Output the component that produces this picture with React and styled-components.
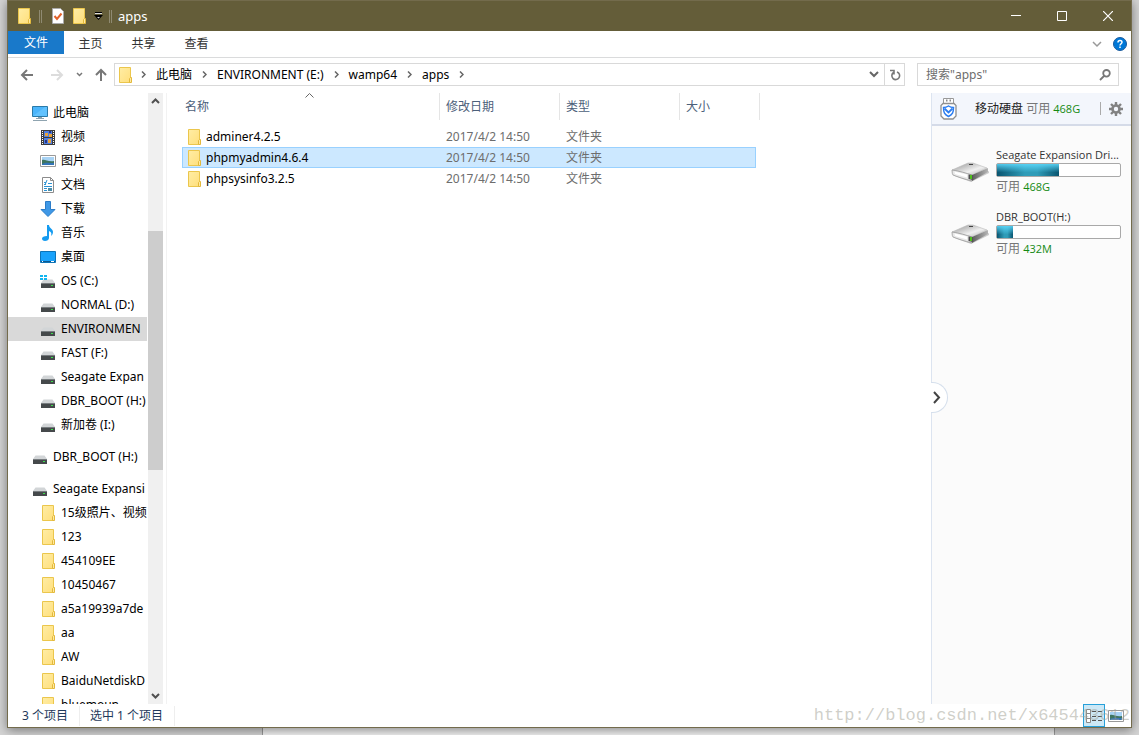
import styled, { createGlobalStyle, css } from 'styled-components';

const GlobalStyle = createGlobalStyle`
  * {
    box-sizing: border-box;
  }
  body {
    margin: 0;
    background: #d4d4d4;
    font-family: 'Noto Sans', 'Noto Sans CJK SC', sans-serif;
    font-size: 12px;
    line-height: 20px;
    color: #000;
  }
  button, input {
    font: inherit;
    color: inherit;
    margin: 0;
    padding: 0;
    border: 0;
    background: none;
  }
  a {
    color: inherit;
    text-decoration: none;
  }
  ul {
    list-style: none;
    margin: 0;
    padding: 0;
  }
  svg {
    display: block;
    flex: none;
  }
`;

const Desktop = styled.div`
  display: flex;
  flex-direction: column;
  height: 100vh;
  overflow: hidden;
`;

const Window = styled.div`
  position: relative;
  z-index: 1;
  flex: 1;
  min-height: 0;
  display: flex;
  flex-direction: column;
  margin: 0 7px;
  background: #fff;
  border: 1px solid #736b4c;
  box-shadow: 0 2px 10px rgba(0, 0, 0, 0.45);
`;

const BackWindow = styled.div`
  flex: none;
  height: 7px;
  margin: 0 84px 0 262px;
  background: #f2f2f2;
  border: solid #9a9a9a;
  border-width: 0 1px;
`;

const TitleBar = styled.header`
  display: flex;
  align-items: center;
  flex: none;
  height: 30px;
  background: #645d39;
  color: #fff;
`;

const QuickAccess = styled.div`
  display: flex;
  align-items: center;
  gap: 8px;
  flex: 1;
  padding-left: 10px;
`;

const TitleGroup = styled.div`
  display: flex;
  align-items: center;
  gap: 6px;
`;

const IconButton = styled.button`
  display: flex;
  align-items: center;
  justify-content: center;
`;

const PropertiesButton = styled(IconButton)`
  padding: 0 1px 0 2px;
`;

const Separator = styled.span`
  width: 3px;
  height: 13px;
  border: solid #8f8a72;
  border-width: 0 1px;
`;

const Title = styled.h1`
  margin: 0;
  font-size: 13px;
  font-weight: 400;
`;

const WindowButton = styled(IconButton)`
  width: 46px;
  height: 30px;
`;

const Tabs = styled.nav`
  display: flex;
  flex: none;
  height: 27px;
  border-bottom: 1px solid #dadbdc;
  color: #333;
`;

const Tab = styled.a`
  width: 53px;
  height: 26px;
  line-height: 26px;
  text-align: center;
  ${({ $primary }) => $primary && css`
    width: 56px;
    height: 23px;
    line-height: 24px;
    background: #1979ca;
    color: #fff;
  `}
`;

const TabTools = styled.div`
  display: flex;
  align-items: center;
  gap: 11px;
  margin-left: auto;
  padding-right: 4px;
`;

const Toolbar = styled.div`
  display: flex;
  align-items: center;
  flex: none;
  height: 35px;
  padding: 0 12px 2px;
`;

const History = styled.div`
  display: flex;
  align-items: center;
  gap: 12px;
  width: 94px;
`;

const AddressBar = styled.div`
  display: flex;
  align-items: center;
  flex: 1;
  height: 23px;
  padding-left: 4px;
  border: 1px solid #d9d9d9;
`;

const Crumbs = styled.div`
  display: flex;
  align-items: center;
  gap: 10px;
  margin-left: 9px;
`;

const AddressTools = styled.div`
  display: flex;
  align-items: center;
  align-self: stretch;
  margin-left: auto;
`;

const AddressButton = styled(IconButton)`
  width: 20px;
  align-self: stretch;
  border-left: ${({ $divided }) => ($divided ? '1px solid #d9d9d9' : 0)};
`;

const SearchBox = styled.label`
  display: flex;
  align-items: center;
  width: 202px;
  height: 23px;
  margin-left: 12px;
  padding: 0 7px 0 8px;
  border: 1px solid #d9d9d9;
  input {
    flex: 1;
    min-width: 0;
    outline: 0;
  }
  input::placeholder {
    color: #6d6d6d;
    opacity: 1;
  }
`;

const Content = styled.div`
  display: flex;
  flex: 1;
  min-height: 0;
`;

const NavPane = styled.aside`
  display: flex;
  flex: none;
  width: 159px;
  padding-right: 3px;
  border-right: 1px solid #f2f2f2;
`;

const Tree = styled.ul`
  flex: 1;
  min-width: 0;
  overflow: hidden;
  padding-top: 8px;
`;

const TreeItem = styled.li`
  margin-top: ${({ $spaced }) => ($spaced ? '8px' : 0)};
  margin-right: 1px;
  overflow: hidden;
  background: ${({ $active }) => ($active ? '#d9d9d9' : 'none')};
  a {
    display: flex;
    align-items: center;
    gap: 5px;
    height: 24px;
    padding-left: ${({ $root }) => ($root ? '24px' : '32px')};
    white-space: nowrap;
  }
`;

const ScrollBar = styled.div`
  display: flex;
  flex-direction: column;
  width: 15px;
  background: #f0f0f0;
`;

const ScrollButton = styled(IconButton)`
  height: 17px;
`;

const ScrollTrack = styled.div`
  flex: 1;
  display: flex;
  flex-direction: column;
`;

const ScrollSpace = styled.div`
  flex: ${({ $size }) => $size};
`;

const ScrollThumb = styled.div`
  flex: 239;
  background: #cdcdcd;
`;

const FileArea = styled.main`
  flex: 1;
  min-width: 0;
  padding-left: 15px;
`;

const FileTable = styled.table`
  width: 574px;
  table-layout: fixed;
  border-collapse: collapse;
`;

const HeaderCell = styled.th`
  position: relative;
  width: ${({ $width }) => $width};
  height: 27px;
  padding: 0 0 0 ${({ $first }) => ($first ? '3px' : '6px')};
  text-align: left;
  font-weight: 400;
  color: #4c607a;
  &::after {
    content: '';
    position: absolute;
    top: 0;
    right: ${({ $last }) => ($last ? '-4px' : 0)};
    width: 1px;
    height: 27px;
    background: #e5e5e5;
  }
`;

const SortMark = styled.span`
  position: absolute;
  top: 0;
  left: 50%;
  margin-left: -6px;
`;

const FileRow = styled.tr`
  ${({ $selected }) => $selected && css`
    background: #cce8ff;
    outline: 1px solid #99d1ff;
    outline-offset: -1px;
  `}
`;

const FileCell = styled.td`
  height: 21px;
  padding: 0 0 0 6px;
  color: #6d6d6d;
`;

const TableGap = styled.tbody`
  td {
    height: 6px;
    padding: 0;
  }
`;

const FileName = styled.a`
  display: flex;
  align-items: center;
  gap: 5px;
  color: #000;
`;

const DiskPane = styled.aside`
  position: relative;
  flex: none;
  width: 200px;
  background: #fbfbfb;
  border-left: 1px solid #dce4f0;
`;

const DiskHeader = styled.div`
  display: flex;
  align-items: center;
  height: 33px;
  padding: 0 8px;
  background: #f3f6fc;
  border-bottom: 2px solid #d5dbe8;
`;

const DiskTitle = styled.h2`
  flex: 1;
  margin: 0 0 0 18px;
  font-size: 12px;
  font-weight: 400;
  color: #222;
`;

const Muted = styled.span`
  color: #777;
`;

const Size = styled.span`
  font-family: 'Open Sans', sans-serif;
  font-size: 11px;
  color: #138a13;
`;

const HeaderRule = styled.span`
  width: 1px;
  height: 13px;
  margin-right: 8px;
  background: #aaa;
`;

const Disk = styled.section`
  display: flex;
  align-items: center;
  gap: 6px;
  height: 62px;
  padding: 0 10px 0 19px;
`;

const DiskList = styled.div`
  padding-top: 14px;
`;

const DiskInfo = styled.div`
  flex: 1;
  min-width: 0;
  line-height: 16px;
`;

const DiskName = styled.div`
  white-space: nowrap;
  font-family: 'Open Sans', sans-serif;
  font-size: 11px;
  color: #333;
`;

const Meter = styled.div`
  height: 14px;
  margin-bottom: 2px;
  border: 1px solid #a9a9a9;
  border-radius: 2px;
  background: #fff;
`;

const MeterFill = styled.div`
  height: 100%;
  background:
    linear-gradient(rgba(90, 215, 250, 0.9), rgba(90, 215, 250, 0) 70%),
    linear-gradient(90deg, #0a5570, #2f9cb8 45%, #2f9cb8 65%, #0a5570);
`;

const Handle = styled.button`
  position: absolute;
  top: 289px;
  left: -1px;
  display: flex;
  align-items: center;
  justify-content: center;
  width: 17px;
  height: 31px;
  padding-right: 5px;
  background: #fff;
  border: 1px solid #d5dfec;
  border-left: 0;
  border-radius: 0 16px 16px 0;
`;

const StatusBar = styled.footer`
  display: flex;
  align-items: center;
  flex: none;
  height: 23px;
  padding-left: 14px;
  color: #1e395b;
`;

const StatusText = styled.span`
  margin-right: 10px;
  padding-right: 11px;
  border-right: 1px solid #eee;
`;

const ViewButtons = styled.div`
  display: flex;
  align-self: stretch;
  margin-left: auto;
  padding-right: 4px;
`;

const ViewButton = styled(IconButton)`
  width: 22px;
  ${({ $active }) => $active && css`
    background: #cce8f6;
    border: 1px solid #26a0da;
  `}
`;

const Watermark = styled.div`
  position: absolute;
  right: 1px;
  bottom: 0;
  z-index: 2;
  font: 17px/22px 'Liberation Mono', monospace;
  color: rgba(160, 160, 148, 0.5);
  pointer-events: none;
`;

const Stroke = ({ d, w = 16, h = 16, color = '#555', width = 1.5 }) => (
  <svg width={w} height={h} viewBox={`0 0 ${w} ${h}`} fill="none" stroke={color} strokeWidth={width}>
    <path d={d} />
  </svg>
);

const FolderIcon = ({ size = 13 }) => (
  <svg width={size} height="16" viewBox={size === 16 ? '-2 0 16 16' : '0 0 13 16'}>
    <defs>
      <linearGradient id="folder" x2="1" y2="1">
        <stop stopColor="#ffeda5" />
        <stop offset="1" stopColor="#ffdf7c" />
      </linearGradient>
    </defs>
    <path d="M.5.5h11v15H.5z" fill="url(#folder)" stroke="#ebc64c" />
    <path d="M10.500 15.500v-4l1-1h1v5z" fill="#ffe9a0" stroke="#e3b93c" />
  </svg>
);

const DriveIcon = ({ os }) => (
  <svg width="16" height="16" viewBox="0 0 16 16">
    <path d="M3.500 6.500h9L15 10H1z" fill="#d2d5d7" />
    <path d="M1 10h14v5H1z" fill="#45494b" />
    <path d="M1 10h14v1H1z" fill="#777c7f" />
    <path d="M11 12h2v1h-2z" fill="#3be04c" />
    {os && <path d="M0 2h3v2H0zM4 2h3v2H4zM0 5h3v2H0zM4 5h3v2H4z" fill="#12b5f0" />}
  </svg>
);

const PcIcon = () => (
  <svg width="16" height="16" viewBox="0 0 16 16">
    <path d="M.5 1.500h15v10H.5z" fill="#4bb5fb" stroke="#2a7aa8" />
    <path d="M1 11 13 2h2v9z" fill="#6bc7ff" opacity=".7" />
    <path d="M6 12h4v1H6zM4 13h8v1H4zM1 15h14v1H1z" fill="#8fa4b0" />
  </svg>
);

const VideoIcon = () => (
  <svg width="16" height="16" viewBox="0 0 16 16">
    <path d="M1 1h14v15H1z" fill="#3c3c3c" />
    <path d="M4 2h8v6H4zM4 9h8v6H4z" fill="#4f7fe0" />
    <path d="M5 4h3v3H5zM8 10h3v4H8zM9 5h3v3H9z" fill="#e8a33a" />
    <path d="M9 2h2v2H9zM5 11h2v3H5z" fill="#26358a" />
    <path d="M2.500 2v14M13.500 2v14" stroke="#fff" strokeDasharray="1 1" />
  </svg>
);

const PictureIcon = () => (
  <svg width="16" height="16" viewBox="0 0 16 16">
    <path d="M.5 2.500h15v11H.5z" fill="#fff" stroke="#999" />
    <path d="M2 4h12v8H2z" fill="#a8d3f5" />
    <path d="M2 7c3-1 6 2 12 1v4H2z" fill="#3f7560" />
    <path d="M2 11c4-2 8-1 12-1v2H2z" fill="#3374b8" />
  </svg>
);

const DocIcon = () => (
  <svg width="16" height="16" viewBox="0 0 16 16">
    <path d="M2.500.5h8l3 3v12h-11z" fill="#fff" stroke="#8c8c8c" />
    <path d="M10.500.5v3h3" fill="none" stroke="#8c8c8c" />
    <path d="M4 7.500h2M4 5.500h2M8 6.500h4M4 9.500h8M4 11.500h3M4 13.500h3M7 3l-2 5" stroke="#2c93d4" />
    <path d="M8 11h4v3H8z" fill="#4d8da8" />
  </svg>
);

const DownloadIcon = () => (
  <svg width="16" height="16" viewBox="0 0 16 16">
    <path d="M5.500.5h5v8h4.500l-7 7-7-7h4.500z" fill="#3f98e6" stroke="#2b7cc8" />
  </svg>
);

const MusicIcon = () => (
  <svg width="16" height="16" viewBox="0 0 16 16">
    <path d="M7 0h2c0 3 4 4 4 7 0 2-1 3-2 4 1-3 0-4-2-5v7c0 2-2 3-4 3s-3-1-3-2.500S4 11 7 11z" fill="#159bf0" />
  </svg>
);

const DesktopIcon = () => (
  <svg width="16" height="16" viewBox="0 0 16 16">
    <path d="M.5 2.500h15v11H.5z" fill="#19a2fb" stroke="#0d74b8" />
    <path d="M1 12h14v1H1z" fill="#0c588f" />
    <path d="M2 12h1v1H2zM11 12h3v1h-3z" fill="#fff" />
  </svg>
);

const UsbIcon = () => (
  <svg width="17" height="22" viewBox="0 0 17 22" fill="none">
    <path d="M3.500 5.500v-5h10v5" fill="#fff" stroke="#999" />
    <path d="M6 2.500h1.500M9.500 2.500H11" stroke="#888" strokeWidth="2" />
    <path d="M3 5.500h11l2 2V18l-3 3H4l-3-3V7.500z" fill="#fff" stroke="#8f8f8f" strokeWidth="1.300" />
    <path d="M3.500 9.500c2 0 3.500-.5 5-1.500 1.500 1 3 1.500 5 1.500 0 5-1 7-5 9-4-2-5-4-5-9z" stroke="#2d7ef0" strokeWidth="1.500" />
    <path d="m4.500 10.500 4 4 4-4" stroke="#2d7ef0" strokeWidth="1.800" />
  </svg>
);

const GearIcon = () => (
  <svg width="14" height="14" viewBox="0 0 14 14" fill="none" stroke="#828282">
    <circle cx="7" cy="7" r="3.500" strokeWidth="2.600" />
    <path d="M7 0v3M7 11v3M0 7h3M11 7h3M2 2l2 2M10 10l2 2M2 12l2-2M10 4l2-2" strokeWidth="2.400" />
  </svg>
);

const HardDiskIcon = () => (
  <svg width="39" height="22" viewBox="0 0 39 22">
    <defs>
      <linearGradient id="diskTop" x2="1" y2="1">
        <stop stopColor="#8f8f8f" />
        <stop offset=".6" stopColor="#f0f0f0" />
        <stop offset="1" stopColor="#aaa" />
      </linearGradient>
      <linearGradient id="diskSide" x2="1">
        <stop stopColor="#5c5c5c" />
        <stop offset="1" stopColor="#b5b5b5" />
      </linearGradient>
    </defs>
    <path d="M1 15 20 22l18-9v-2L21 19z" fill="#ccc" />
    <path d="M1 10 17 3h5l14 5-15 7z" fill="url(#diskTop)" stroke="#bbb" strokeWidth=".6" />
    <path d="M18 4h4v1h-4z" fill="#444" />
    <path d="M1 10c7 1 14 3 20 5v6C13 19 7 17 2 15q-1-1-1-5z" fill="#e8e8e8" stroke="#999" strokeWidth=".8" />
    <path d="M3.500 11.500 16 14.500v3L4 14z" fill="#fff" />
    <path d="M21 15 37 8v4l-16 9z" fill="url(#diskSide)" />
    <path d="m17.500 14.500 4 .5v5l-4-1z" fill="#4b4b4b" />
    <path d="M19 15h2v4h-2z" fill="#4fbf1d" />
  </svg>
);

const TREE = [
  { label: '此电脑', icon: <PcIcon />, root: true },
  { label: '视频', icon: <VideoIcon /> },
  { label: '图片', icon: <PictureIcon /> },
  { label: '文档', icon: <DocIcon /> },
  { label: '下载', icon: <DownloadIcon /> },
  { label: '音乐', icon: <MusicIcon /> },
  { label: '桌面', icon: <DesktopIcon /> },
  { label: 'OS (C:)', icon: <DriveIcon os /> },
  { label: 'NORMAL (D:)' },
  { label: 'ENVIRONMEN', active: true },
  { label: 'FAST (F:)' },
  { label: 'Seagate Expan' },
  { label: 'DBR_BOOT (H:)' },
  { label: '新加卷 (I:)' },
  { label: 'DBR_BOOT (H:)', root: true, spaced: true },
  { label: 'Seagate Expansi', root: true, spaced: true },
  ...['15级照片、视频', '123', '454109EE', '10450467', 'a5a19939a7de', 'aa', 'AW', 'BaiduNetdiskD', 'bluemoun'].map(
    (label) => ({ label, icon: <FolderIcon size={16} /> })
  ),
];

const FILES = ['adminer4.2.5', 'phpmyadmin4.6.4', 'phpsysinfo3.2.5'];

const DISKS = [
  { name: 'Seagate Expansion Dri...', free: '468G', used: 50 },
  { name: 'DBR_BOOT(H:)', free: '432M', used: 13 },
];

const CRUMBS = ['此电脑', 'ENVIRONMENT (E:)', 'wamp64', 'apps'];

const CrumbArrow = () => <Stroke d="m1 .5 3 3-3 3" w={5} h={7} color="#666" />;

const App = () => (
  <Desktop>
    <GlobalStyle />
    <Window>
      <TitleBar>
        <QuickAccess>
          <FolderIcon />
          <Separator />
          <PropertiesButton aria-label="Properties">
            <svg width="12" height="16" viewBox="0 0 12 16">
              <path d="M.5.5h8l3 3v12H.5z" fill="#fff" stroke="#aaa" />
              <path d="m2.500 8 2.500 3 4.500-5.500" fill="none" stroke="#e2622a" strokeWidth="2" />
            </svg>
          </PropertiesButton>
          <IconButton aria-label="New folder"><FolderIcon /></IconButton>
          <TitleGroup>
            <IconButton aria-label="Customize">
              <svg width="9" height="8" viewBox="0 0 9 8">
                <path d="M1 0h7v1H1zM0 3h9L4.500 8z" fill="#000" />
                <path d="M1 1h7v1H1zM3 5h3L4.500 6.500z" fill="#ddd" />
              </svg>
            </IconButton>
            <Separator />
            <Title>apps</Title>
          </TitleGroup>
        </QuickAccess>
        <WindowButton aria-label="Minimize"><Stroke d="M0 4.500h10" w={10} h={10} color="#fff" width={1} /></WindowButton>
        <WindowButton aria-label="Maximize"><Stroke d="M.5.5h9v9h-9z" w={10} h={10} color="#fff" width={1} /></WindowButton>
        <WindowButton aria-label="Close"><Stroke d="m0 0 10 10M10 0 0 10" w={10} h={10} color="#fff" width={1.2} /></WindowButton>
      </TitleBar>

      <Tabs>
        <Tab href="#" $primary>文件</Tab>
        <Tab href="#">主页</Tab>
        <Tab href="#">共享</Tab>
        <Tab href="#">查看</Tab>
        <TabTools>
          <IconButton aria-label="Expand ribbon"><Stroke d="m1 1 4 4 4-4" w={10} h={7} color="#999" /></IconButton>
          <IconButton aria-label="Help">
            <svg width="14" height="14" viewBox="0 0 14 14">
              <circle cx="7" cy="7" r="6.500" fill="#0078d7" stroke="#1a5a9c" />
              <path d="M5 5.500C5 2.800 9 2.800 9 5.200 9 6.700 7 6.800 7 8.500M7 9.500v1.500" fill="none" stroke="#fff" strokeWidth="1.500" />
            </svg>
          </IconButton>
        </TabTools>
      </Tabs>

      <Toolbar>
        <History>
          <IconButton aria-label="Back"><Stroke d="M13 6H2M7 1 2 6l5 5" w={18} h={12} color="#777" width={2} /></IconButton>
          <IconButton aria-label="Forward"><Stroke d="M1 6h11M7 1l5 5-5 5" w={14} h={12} color="#dcdcdc" width={2} /></IconButton>
          <IconButton aria-label="Recent"><Stroke d="m1 1 2.500 2.500L6 1" w={7} h={5} color="#777" /></IconButton>
          <IconButton aria-label="Up"><Stroke d="M6 13V2M1 7l5-5 5 5" w={12} h={13} color="#777" width={2} /></IconButton>
        </History>
        <AddressBar>
          <FolderIcon />
          <Crumbs>
            <CrumbArrow />
            {CRUMBS.map((name) => [
              <a key={name} href="#">{name}</a>,
              <CrumbArrow key={`${name}-arrow`} />,
            ])}
          </Crumbs>
          <AddressTools>
            <AddressButton aria-label="Previous locations"><Stroke d="m1 1 4 4 4-4" w={10} h={7} color="#666" width={2} /></AddressButton>
            <AddressButton $divided aria-label="Refresh">
              <Stroke d="M1 1.500h4v4M4.500 3.500A3.900 3.900 0 1 0 8 3" w={12} h={12} color="#777" width={1.600} />
            </AddressButton>
          </AddressTools>
        </AddressBar>
        <SearchBox>
          <input type="search" aria-label="Search" placeholder={'搜索"apps"'} />
          <Stroke d="M5 7 1 11M7.500 1a3.300 3.300 0 1 1 0 6.600 3.300 3.300 0 0 1 0-6.600z" w={12} h={12} color="#777" width={1.800} />
        </SearchBox>
      </Toolbar>

      <Content>
        <NavPane>
          <Tree>
            {TREE.map((item, i) => (
              <TreeItem key={i} $root={item.root} $spaced={item.spaced} $active={item.active}>
                <a href="#">{item.icon || <DriveIcon />}{item.label}</a>
              </TreeItem>
            ))}
          </Tree>
          <ScrollBar>
            <ScrollButton aria-label="Scroll up"><Stroke d="m1 5 3.500-3.500L8 5" w={9} h={7} color="#505050" width={2} /></ScrollButton>
            <ScrollTrack>
              <ScrollSpace $size={121} />
              <ScrollThumb />
              <ScrollSpace $size={217} />
            </ScrollTrack>
            <ScrollButton aria-label="Scroll down"><Stroke d="m1 2 3.500 3.500L8 2" w={9} h={7} color="#505050" width={2} /></ScrollButton>
          </ScrollBar>
        </NavPane>

        <FileArea>
          <FileTable>
            <thead>
              <tr>
                <HeaderCell $width="258px" $first>
                  名称
                  <SortMark><Stroke d="m.5 4.500 4-4 4 4" w={9} h={5} color="#666" width={1} /></SortMark>
                </HeaderCell>
                <HeaderCell $width="120px">修改日期</HeaderCell>
                <HeaderCell $width="120px">类型</HeaderCell>
                <HeaderCell $last>大小</HeaderCell>
              </tr>
            </thead>
            <TableGap><tr><td colSpan="4" /></tr></TableGap>
            <tbody>
              {FILES.map((name, i) => (
                <FileRow key={name} $selected={i === 1}>
                  <FileCell><FileName href="#"><FolderIcon />{name}</FileName></FileCell>
                  <FileCell>2017/4/2 14:50</FileCell>
                  <FileCell>文件夹</FileCell>
                  <FileCell />
                </FileRow>
              ))}
            </tbody>
          </FileTable>
        </FileArea>

        <DiskPane>
          <DiskHeader>
            <UsbIcon />
            <DiskTitle>移动硬盘 <Muted>可用</Muted> <Size>468G</Size></DiskTitle>
            <HeaderRule />
            <IconButton aria-label="Settings"><GearIcon /></IconButton>
          </DiskHeader>
          <DiskList>
            {DISKS.map((disk) => (
              <Disk key={disk.name}>
                <HardDiskIcon />
                <DiskInfo>
                  <DiskName>{disk.name}</DiskName>
                  <Meter><MeterFill style={{ width: `${disk.used}%` }} /></Meter>
                  <Muted>可用</Muted> <Size>{disk.free}</Size>
                </DiskInfo>
              </Disk>
            ))}
          </DiskList>
          <Handle aria-label="Collapse"><Stroke d="m1 1 5 5.500L1 12" w={8} h={13} color="#444" width={2} /></Handle>
        </DiskPane>
      </Content>

      <StatusBar>
        <StatusText>3 个项目</StatusText>
        <StatusText>选中 1 个项目</StatusText>
        <ViewButtons>
          <ViewButton $active aria-label="Details view">
            <svg width="16" height="14" viewBox="0 0 16 14" fill="none">
              <path d="M.5.5h4v13h-4zM.5 4.500h4M.5 9.500h4" stroke="#888" fill="#fff" />
              <path d="M6 2.500h4M12 2.500h4M6 7.500h4M12 7.500h4M6 11.500h4M12 11.500h4" stroke="#555" />
            </svg>
          </ViewButton>
          <ViewButton aria-label="Large icons view"><PictureIcon /></ViewButton>
        </ViewButtons>
      </StatusBar>
      <Watermark>http://blog.csdn.net/x645443612</Watermark>
    </Window>
    <BackWindow />
  </Desktop>
);

export default App;
